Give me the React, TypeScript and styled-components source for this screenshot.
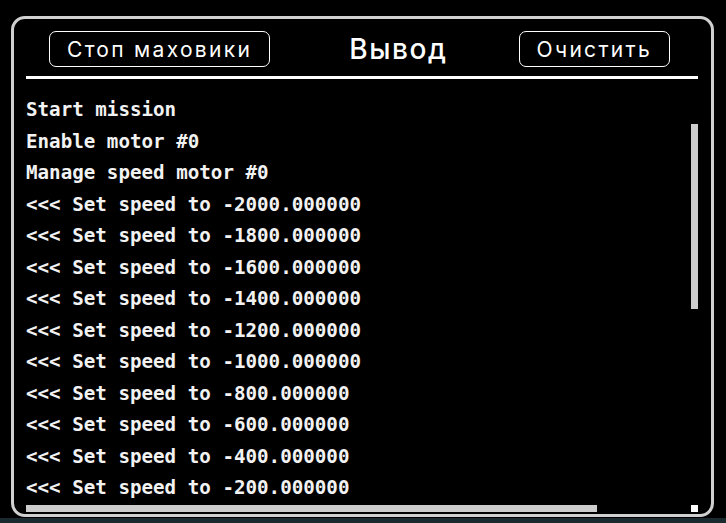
import React from "react";
import styled, { createGlobalStyle } from "styled-components";

const GlobalStyle = createGlobalStyle`
  html, body {
    margin: 0;
    padding: 0;
    background: #1a2a2e;
  }
  body {
    font-family: "Inter", "Noto Sans", sans-serif;
  }
`;

const Page = styled.div`
  box-sizing: border-box;
  height: 518px;
  background: #000;
  padding: 16px 12px 1px 11px;
`;

const Panel = styled.section`
  box-sizing: border-box;
  width: 703px;
  height: 501px;
  border: 3px solid #d0d0d0;
  border-radius: 14px;
  padding: 12px 13px 2px 12px;
  display: flex;
  flex-direction: column;
`;

const Header = styled.header`
  display: flex;
  align-items: center;
  justify-content: space-between;
  height: 36px;
  padding: 0 28px 9px 23px;
  border-bottom: 3px solid #ffffff;
`;

const ActionButton = styled.button`
  box-sizing: border-box;
  height: 36px;
  padding: 0 17px;
  background: transparent;
  color: #ffffff;
  border: 1px solid #ffffff;
  border-radius: 7px;
  font-family: "Inter", "Noto Sans", sans-serif;
  font-size: 21px;
  font-weight: 400;
  letter-spacing: 2.3px;
  cursor: pointer;
`;

const Title = styled.h1`
  margin: 0 0 0 8px;
  color: #ffffff;
  font-family: "Inter", "Noto Sans", sans-serif;
  font-size: 28px;
  font-weight: 500;
  letter-spacing: 1.6px;
`;

const LogFrame = styled.div`
  position: relative;
  flex: none;
  height: 420px;
  margin-top: 13px;
  overflow: hidden;
`;

const LogList = styled.div`
  padding-top: 2px;
`;

const LogLine = styled.div`
  font-family: "DejaVu Sans Mono", "Liberation Mono", monospace;
  font-weight: bold;
  font-size: 19.2px;
  line-height: 31.5px;
  color: #f2f2f2;
  white-space: pre;
`;

const VTrack = styled.div<{ $offset: number }>`
  position: absolute;
  top: 0;
  right: 0;
  bottom: 7px;
  width: 7px;
  padding-top: ${(p) => p.$offset}px;
  box-sizing: border-box;
`;

const VThumb = styled.div<{ $size: number }>`
  width: 7px;
  height: ${(p) => p.$size}px;
  background: #cdcdcd;
`;

const HTrack = styled.div`
  position: absolute;
  left: 0;
  right: 7px;
  bottom: 0;
  height: 7px;
`;

const HThumb = styled.div<{ $size: number }>`
  height: 7px;
  width: ${(p) => p.$size}px;
  background: #cdcdcd;
`;

const Corner = styled.div`
  position: absolute;
  right: 0;
  bottom: 0;
  width: 7px;
  height: 7px;
  background: #ffffff;
`;

const speeds = [
  -2000, -1800, -1600, -1400, -1200, -1000, -800, -600, -400, -200,
];

const lines: string[] = [
  "Start mission",
  "Enable motor #0",
  "Manage speed motor #0",
  ...speeds.map((s) => `<<< Set speed to ${s.toFixed(6)}`),
];

export default function App() {
  return (
    <>
      <GlobalStyle />
      <Page>
        <Panel>
          <Header>
            <ActionButton>Стоп маховики</ActionButton>
            <Title>Вывод</Title>
            <ActionButton>Очистить</ActionButton>
          </Header>
          <LogFrame>
            <LogList>
              {lines.map((l, i) => (
                <LogLine key={i}>{l}</LogLine>
              ))}
            </LogList>
            <VTrack $offset={32}>
              <VThumb $size={185} />
            </VTrack>
            <HTrack>
              <HThumb $size={571} />
            </HTrack>
            <Corner />
          </LogFrame>
        </Panel>
      </Page>
    </>
  );
}
